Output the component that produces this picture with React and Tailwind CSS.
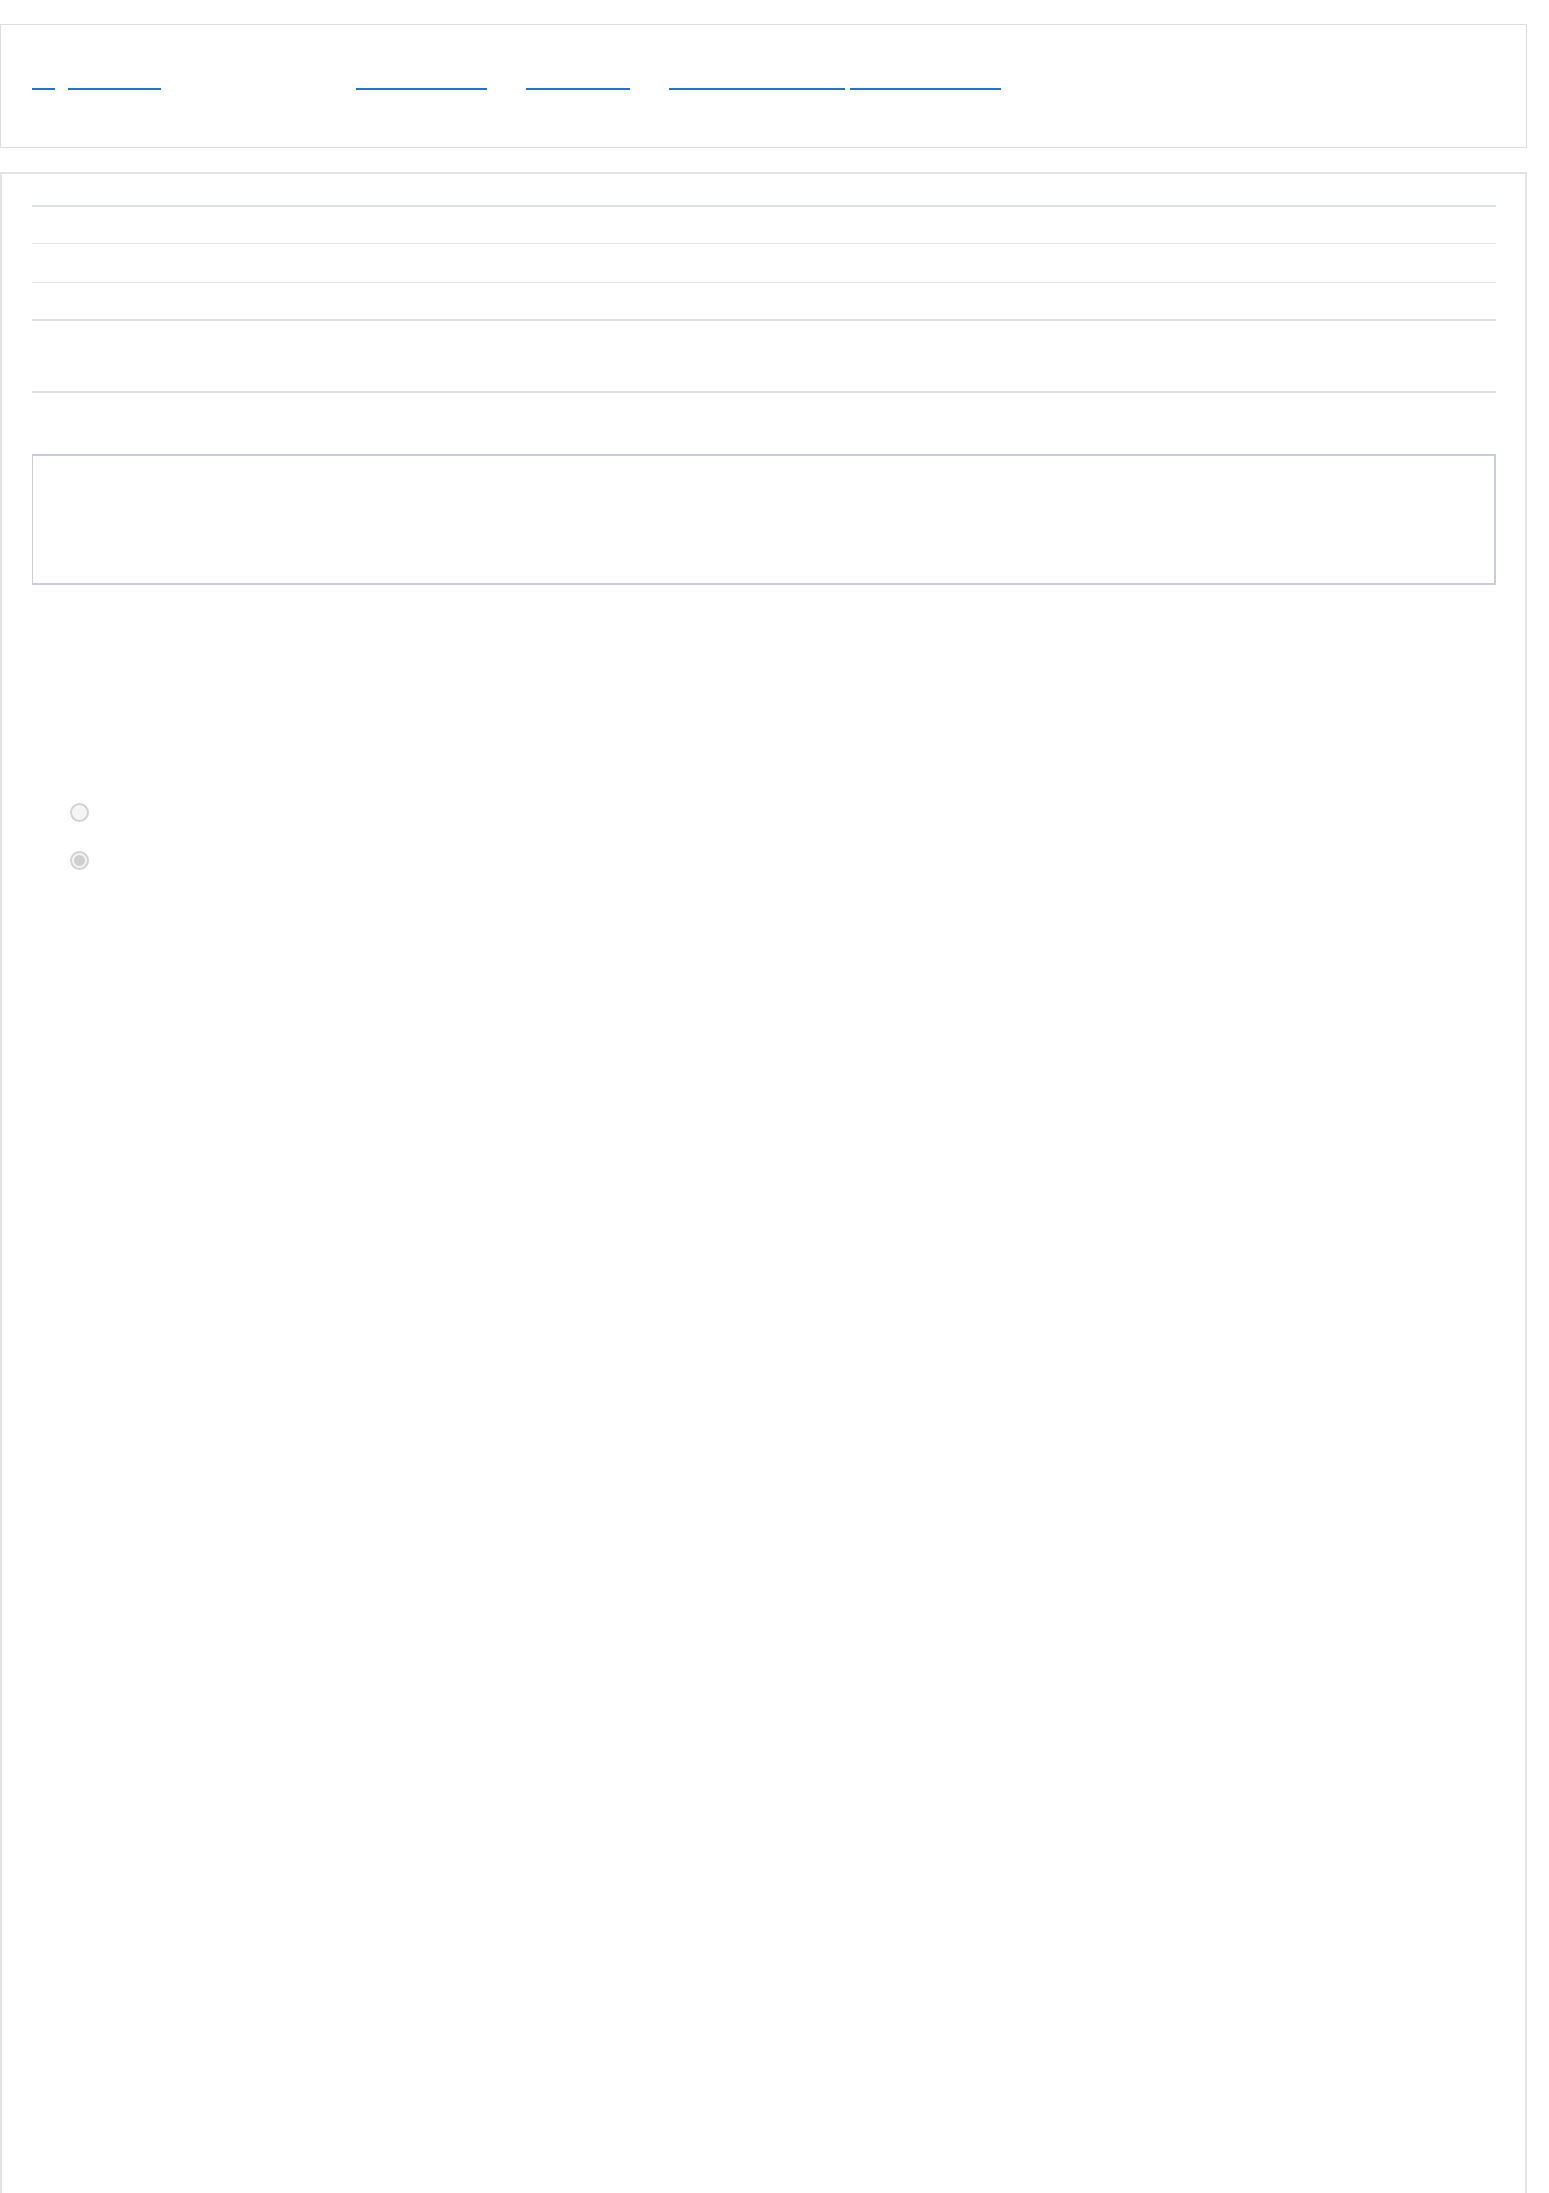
const Underline = ({ w, ml }) => (
  <span className={`block h-[2px] bg-[#1976d2] ${w} ${ml}`} />
);

const Radio = ({ checked }) => (
  <span className="flex h-[19px] w-[19px] items-center justify-center rounded-full border-2 border-[#d2d2d2] bg-[#f5f5f5]">
    {checked && <span className="block h-[11px] w-[11px] rounded-full bg-[#cfcfcf]" />}
  </span>
);

export default function App() {
  return (
    <div className="min-h-screen bg-white font-['Liberation_Sans',sans-serif]">
      <div className="pt-[24px]">
        {/* top nav box */}
        <div className="h-[124px] w-[1527px] border border-[#dedede] bg-white pl-[31px] pt-[63px]">
          <div className="flex">
            <Underline w="w-[23px]" ml="ml-0" />
            <Underline w="w-[93px]" ml="ml-[13px]" />
            <Underline w="w-[131px]" ml="ml-[195px]" />
            <Underline w="w-[104px]" ml="ml-[39px]" />
            <Underline w="w-[176px]" ml="ml-[39px]" />
            <Underline w="w-[151px]" ml="ml-[5px]" />
          </div>
        </div>

        {/* main panel */}
        <div className="mt-[24px] h-[2030px] w-[1527px] border-2 border-[#e4e4e4] bg-white pl-[30px] pr-[29px] pt-[31px]">
          <div className="h-[2px] bg-[#dde0e4]" />
          <div className="mt-[36px] h-px bg-[#e6e6e6]" />
          <div className="mt-[38px] h-px bg-[#e6e6e6]" />
          <div className="mt-[36px] h-[2px] bg-[#dde0e4]" />
          <div className="mt-[70px] h-[2px] bg-[#dde0e4]" />

          <div className="mt-[61px] h-[131px] border-y-2 border-r-2 border-l border-[#c9cdd6] bg-white" />

          <div className="mt-[218px] flex flex-col gap-[29px] pl-[38px]">
            <Radio />
            <Radio checked />
          </div>
        </div>
      </div>
    </div>
  );
}
